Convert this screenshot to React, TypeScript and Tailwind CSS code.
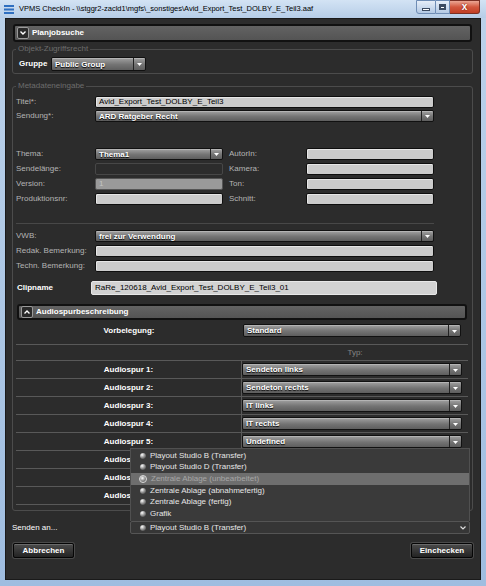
import React from "react";

const comboFill =
  "bg-gradient-to-b from-[#9a9a9a] via-[#747474] to-[#5e5e5e]";

function Tri() {
  return (
    <svg width="5" height="3" viewBox="0 0 5 3">
      <polygon points="0,0 5,0 2.5,3" fill="#fff" />
    </svg>
  );
}

function Combo({ text }: { text: string }) {
  return (
    <div className="flex h-full gap-px rounded-[2px] border border-[#111] bg-[#222]">
      <div className={"flex flex-1 items-center rounded-l-[1px] border-t border-[#b4b4b4] pl-[3px] font-bold text-white [text-shadow:0_1px_1px_#000] " + comboFill}>
        {text}
      </div>
      <div className={"flex w-[11px] items-center justify-center rounded-r-[1px] border-t border-[#b4b4b4] " + comboFill}>
        <Tri />
      </div>
    </div>
  );
}

function Input({ value, tone = "light" }: { value?: string; tone?: "light" | "dark" | "mid" }) {
  const cls =
    tone === "dark"
      ? "bg-[#2c2c2c] border-[#474747]"
      : tone === "mid"
      ? "bg-[#9a9a9a] border-[#555] text-[#c4c4c4]"
      : "bg-[#cbcbcb] border-[#0e0e0e] text-black shadow-[inset_1px_1px_0_#e6e6e6]";
  return (
    <div className={"flex h-full items-center rounded-[2px] border pl-[3px] " + cls}>{value}</div>
  );
}

function SectionBar({ label, up }: { label: string; up?: boolean }) {
  return (
    <div className="flex h-full items-center rounded-[3px] border-2 border-[#111] bg-gradient-to-b from-[#636363] to-[#545454]">
      <div className="ml-[2px] flex h-[12px] w-[12px] items-center justify-center rounded-[2px] border border-[#9a9a9a] bg-[#2a2a2a]">
        <svg width="6" height="4" viewBox="0 0 6 4">
          {up ? (
            <polyline points="0.5,3.5 3,1 5.5,3.5" fill="none" stroke="#fff" strokeWidth="1.4" />
          ) : (
            <polyline points="0.5,0.5 3,3 5.5,0.5" fill="none" stroke="#fff" strokeWidth="1.4" />
          )}
        </svg>
      </div>
      <span className="ml-[3px] font-bold text-white">{label}</span>
    </div>
  );
}

function Bullet({ big }: { big?: boolean }) {
  return big ? (
    <div className="h-[8px] w-[8px] rounded-full border border-[#ddd] bg-[radial-gradient(circle_at_40%_35%,#fff,#9a9a9a_45%,#3a3a3a)]" />
  ) : (
    <div className="h-[6px] w-[6px] rounded-full bg-[radial-gradient(circle_at_35%_30%,#fff,#a0a0a0_40%,#202020)]" />
  );
}

function Button({ label }: { label: string }) {
  return (
    <div className="flex h-full items-center justify-center rounded-[2px] border border-[#050505] bg-gradient-to-b from-[#4c4c4c] to-[#232323] font-bold text-white shadow-[0_0_0_1px_#4a4a4a,inset_0_1px_0_#6a6a6a]">
      {label}
    </div>
  );
}

const lbl = "text-[#b4b4b4]";

const options = [
  "Playout Studio B (Transfer)",
  "Playout Studio D (Transfer)",
  "Zentrale Ablage (unbearbeitet)",
  "Zentrale Ablage (abnahmefertig)",
  "Zentrale Ablage (fertig)",
  "Grafik",
];

const tracks: (string | null)[] = [
  "Sendeton links",
  "Sendeton rechts",
  "IT links",
  "IT rechts",
  "Undefined",
  null,
  null,
  null,
];

export default function App() {
  return (
    <div className="flex h-[586px] w-[486px] flex-col bg-gradient-to-b from-[#bcd2ea] to-[#9fbde0] font-['Liberation_Sans',Arial,sans-serif] text-[8px] leading-none">
      {/* title bar */}
      <div className="relative flex h-[18px] shrink-0 items-center bg-gradient-to-b from-[#d3e3f4] to-[#b6cde7]">
        <svg className="ml-[4px]" width="10" height="10" viewBox="0 0 10 10">
          <rect x="0" y="1" width="10" height="2" fill="#2f6fc0" />
          <rect x="0" y="4.5" width="10" height="2" fill="#2f6fc0" />
          <rect x="0" y="8" width="10" height="2" fill="#2f6fc0" />
        </svg>
        <span className="ml-[5px] text-[7.5px] text-black">
          {"VPMS CheckIn - \\\\stggr2-zacld1\\mgfs\\_sonstiges\\Avid_Export_Test_DOLBY_E_Teil3.aaf"}
        </span>
        <div className="absolute right-[6px] top-0 flex h-[14px]">
          <div className="flex w-[20px] items-center justify-center rounded-bl-[3px] border border-[#6f8db5] bg-gradient-to-b from-[#e6eef8] to-[#b3c9e4]">
            <div className="mt-[4px] h-[3px] w-[8px] border border-[#3b4a60] bg-white" />
          </div>
          <div className="flex w-[14px] items-center justify-center border-y border-r border-[#6f8db5] bg-gradient-to-b from-[#e6eef8] to-[#b3c9e4]">
            <div className="h-[6px] w-[7px] border-2 border-t-[3px] border-[#3b4a60] bg-white" />
          </div>
          <div className="flex w-[30px] items-center justify-center rounded-br-[3px] border-y border-r border-[#7a3025] bg-gradient-to-b from-[#eaa694] via-[#d2573e] to-[#c13f25] text-[10px] font-bold text-white [text-shadow:0_0_2px_#600]">
            x
          </div>
        </div>
      </div>

      {/* client area */}
      <div className="mx-[5px] mb-[6px] flex flex-1 flex-col border border-[#1a1a1a] bg-[#2c2c2c] pl-[6px] pr-[7px] pt-[5px]">
        <div className="mx-[1px] h-[18px]">
          <SectionBar label="Planjobsuche" />
        </div>

        <fieldset className="mt-[2px] rounded-[3px] border border-[#4c4c4c] pb-[2px]">
          <legend className="ml-[3px] px-[2px] leading-[10px] text-[#6c6c6c]">Objekt-Zugriffsrecht</legend>
          <div className="mt-[3px] flex h-[14px] items-center">
            <span className="ml-[6px] w-[32px] font-bold text-white">Gruppe</span>
            <div className="h-full w-[95px]">
              <Combo text="Public Group" />
            </div>
          </div>
        </fieldset>

        <fieldset className="mt-[7px] rounded-[3px] border border-[#4c4c4c] pb-[5px]">
          <legend className="ml-[3px] px-[2px] leading-[10px] text-[#6c6c6c]">Metadateneingabe</legend>

          <div className="mt-[5px] flex h-[12px] items-center pl-[3px]">
            <span className={"w-[79px] " + lbl}>Titel*:</span>
            <div className="h-full w-[339px]"><Input value="Avid_Export_Test_DOLBY_E_Teil3" /></div>
          </div>
          <div className="mt-[2px] flex h-[12px] items-center pl-[3px]">
            <span className={"w-[79px] " + lbl}>Sendung*:</span>
            <div className="h-full w-[339px]"><Combo text="ARD Ratgeber Recht" /></div>
          </div>

          <div className="mt-[26px] flex flex-col gap-[3px] pl-[3px]">
            {[
              ["Thema:", "combo", "AutorIn:"],
              ["Sendelänge:", "dark", "Kamera:"],
              ["Version:", "mid", "Ton:"],
              ["Produktionsnr:", "light", "Schnitt:"],
            ].map(([l, kind, r]) => (
              <div key={l} className="flex h-[12px] items-center">
                <span className={"w-[79px] " + lbl}>{l}</span>
                <div className="h-full w-[128px]">
                  {kind === "combo" ? (
                    <Combo text="Thema1" />
                  ) : kind === "dark" ? (
                    <Input tone="dark" />
                  ) : kind === "mid" ? (
                    <Input tone="mid" value="1" />
                  ) : (
                    <Input />
                  )}
                </div>
                <span className={"ml-[6px] w-[77px] " + lbl}>{r}</span>
                <div className="h-full w-[128px]"><Input /></div>
              </div>
            ))}
          </div>

          <div className="ml-[3px] mt-[18px] h-px w-[418px] bg-[#484848]" />

          <div className="mt-[6px] flex flex-col gap-[3px] pl-[3px]">
            <div className="flex h-[12px] items-center">
              <span className={"w-[79px] " + lbl}>VWB:</span>
              <div className="h-full w-[339px]"><Combo text="frei zur Verwendung" /></div>
            </div>
            <div className="flex h-[12px] items-center">
              <span className={"w-[79px] " + lbl}>Redak. Bemerkung:</span>
              <div className="h-full w-[339px]"><Input /></div>
            </div>
            <div className="flex h-[12px] items-center">
              <span className={"w-[79px] " + lbl}>Techn. Bemerkung:</span>
              <div className="h-full w-[339px]"><Input /></div>
            </div>
          </div>

          <div className="mt-[9px] flex h-[14px] items-center pl-[4px]">
            <span className="w-[74px] font-bold text-white">Clipname</span>
            <div className="flex h-full w-[346px] items-center rounded-[2px] border border-[#e8e8e8] bg-[#d2d2d2] pl-[3px] text-black">
              RaRe_120618_Avid_Export_Test_DOLBY_E_Teil3_01
            </div>
          </div>

          <div className="ml-[4px] mr-[5px] mt-[9px] h-[16px]">
            <SectionBar label="Audiospurbeschreibung" up />
          </div>

          <div className="ml-[3px] mr-[4px] mt-[4px]">
            <div className="flex h-[13px]">
              <div className="flex w-[226px] items-center justify-center font-bold text-white">Vorbelegung:</div>
              <div className="ml-px h-full w-[218px]"><Combo text="Standard" /></div>
            </div>
            <div className="mt-[7px] flex h-[17px] border-y border-[#595959]">
              <div className="w-[226px]" />
              <div className="flex flex-1 items-center justify-center text-[#858585]">Typ:</div>
            </div>
            {tracks.map((t, i) => (
              <div key={i} className="flex h-[18px] border-b border-[#595959]">
                <div className="flex w-[226px] items-center justify-center border-r border-[#595959] font-bold text-white">
                  Audiospur {i + 1}:
                </div>
                <div className="flex flex-1 items-center pr-[6px]">
                  {t && (
                    <div className="h-[13px] w-full"><Combo text={t} /></div>
                  )}
                </div>
              </div>
            ))}
          </div>
        </fieldset>

        <div className="relative mt-[10px] flex h-[13px] items-center">
          <span className="w-[118px] text-white">Senden an...</span>
          <div className="mr-[3px] flex h-full flex-1 items-center rounded-[2px] border border-[#555] bg-[#363636] pl-[9px] text-[#e8e8e8]">
            <Bullet />
            <span className="ml-[4px]">Playout Studio B (Transfer)</span>
            <svg className="ml-auto mr-[3px]" width="6" height="4" viewBox="0 0 6 4">
              <polyline points="0.5,0.5 3,3 5.5,0.5" fill="none" stroke="#ddd" strokeWidth="1.2" />
            </svg>
          </div>

          <div className="absolute bottom-full left-[118px] right-[3px] flex h-[73px] flex-col border border-b-0 border-[#505050] bg-[#3a3a3a] pb-[2px] pt-px">
            {options.map((o, i) => (
              <div
                key={o}
                className={
                  "flex h-[11.6px] shrink-0 items-center " +
                  (i === 2 ? "bg-[#6e6e6e] pl-[8px] text-[#a6a6a6]" : "pl-[9px] text-[#e6e6e6]")
                }
              >
                <Bullet big={i === 2} />
                <span className="ml-[4px]">{o}</span>
              </div>
            ))}
          </div>
        </div>

        <div className="mt-[9px] flex h-[15px] justify-between pl-px">
          <div className="w-[61px]"><Button label="Abbrechen" /></div>
          <div className="w-[62px]"><Button label="Einchecken" /></div>
        </div>
      </div>
    </div>
  );
}
